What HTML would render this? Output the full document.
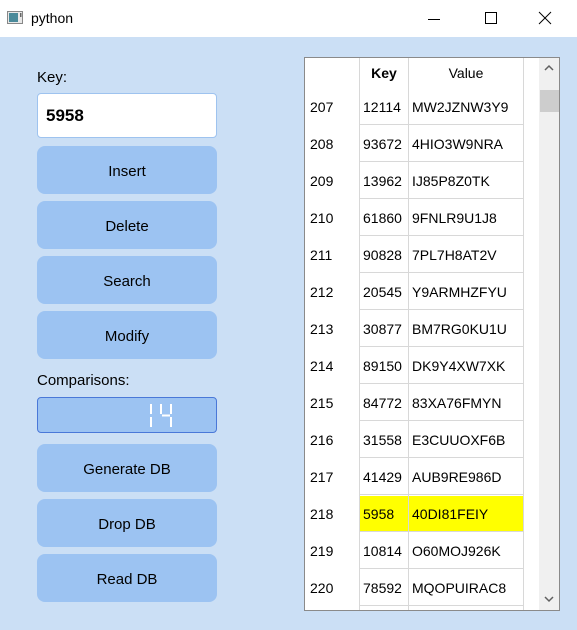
<!DOCTYPE html>
<html><head><style>
body{margin:0;width:577px;height:630px;background:#cbdff5;font-family:"Liberation Sans","DejaVu Sans",sans-serif;position:relative;overflow:hidden}
.tb{position:absolute;left:0;top:0;width:577px;height:37px;background:#fff}
.tb .t{position:absolute;left:31px;top:10px;font-size:14px;color:#000}
.ab{position:absolute}
.lbl{position:absolute;left:37px;font-size:15px;color:#000}
.inp{position:absolute;left:37px;top:93px;width:178px;height:43px;background:#fff;border:1px solid #9ec3ef;border-radius:4px;box-sizing:content-box}
.inp span{position:absolute;left:8px;top:12px;font-size:17px;font-weight:bold}
.btn{position:absolute;left:37px;width:180px;height:48px;background:#9cc3f2;border-radius:8px;text-align:center;line-height:52px;font-size:15px;color:#000}
.lcd{position:absolute;left:37px;top:397px;width:178px;height:34px;background:#9cc3f2;border:1px solid #4a78d8;border-radius:4px}
.tbl{position:absolute;left:304px;top:57px;width:254px;height:552px;border:1px solid #8a8a8a;background:#fff;overflow:hidden}
.row{position:absolute;left:0;height:37px;font-size:14px}
.row div{position:absolute;top:0;height:36px;line-height:36px}
.sb{position:absolute;left:234px;top:0;width:20px;height:552px;background:#f0f0f0}
</style></head><body>
<div class="tb">
<svg class="ab" style="left:7px;top:11px" width="18" height="14"><rect x="0.5" y="0.5" width="15" height="12" fill="#e8e8e8" stroke="#888"/><rect x="2" y="2" width="9" height="9" fill="#4a8a9a"/><rect x="13" y="2" width="1.5" height="4" fill="#666"/></svg>
<span class="t">python</span>
<svg class="ab" style="left:420px;top:8px" width="150" height="22" stroke="#000" stroke-width="1" fill="none"><line x1="8" y1="11.5" x2="20" y2="11.5"/><rect x="65.5" y="4.5" width="11" height="11"/><line x1="119" y1="4" x2="131" y2="16"/><line x1="131" y1="4" x2="119" y2="16"/></svg>
</div>
<div class="lbl" style="top:69px">Key:</div>
<div class="inp"><span>5958</span></div>
<div class="btn" style="top:146px">Insert</div>
<div class="btn" style="top:201px">Delete</div>
<div class="btn" style="top:256px">Search</div>
<div class="btn" style="top:311px">Modify</div>
<div class="lbl" style="top:372px">Comparisons:</div>
<div class="lcd"><svg class="ab" style="left:108px;top:5px" width="30" height="26" stroke="#fff" stroke-width="2" fill="none"><line x1="5" y1="1" x2="5" y2="11"/><line x1="5" y1="14" x2="5" y2="24"/><line x1="15" y1="1" x2="15" y2="11"/><line x1="16" y1="12.5" x2="24" y2="12.5"/><line x1="25" y1="1" x2="25" y2="11"/><line x1="25" y1="14" x2="25" y2="24"/></svg></div>
<div class="btn" style="top:444px">Generate DB</div>
<div class="btn" style="top:499px">Drop DB</div>
<div class="btn" style="top:554px">Read DB</div>
<div class="tbl">
<div style="position:absolute;left:54px;top:0;width:1px;height:552px;background:#d8d8d8"></div>
<div style="position:absolute;left:103px;top:0;width:1px;height:552px;background:#d8d8d8"></div>
<div style="position:absolute;left:218px;top:0;width:1px;height:552px;background:#d8d8d8"></div>
<div class="row" style="top:0;height:31px"><div style="left:55px;width:48px;text-align:center;line-height:31px;font-weight:bold">Key</div><div style="left:104px;width:114px;text-align:center;line-height:31px">Value</div></div>
<div id="rows"></div>
<div class="sb"><div style="position:absolute;left:1px;top:32px;width:19px;height:22px;background:#cdcdcd"></div>
<svg class="ab" style="left:5px;top:6px" width="10" height="8" stroke="#606060" stroke-width="1.5" fill="none"><polyline points="1,6 5,2 9,6"/></svg>
<svg class="ab" style="left:5px;top:537px" width="10" height="8" stroke="#606060" stroke-width="1.5" fill="none"><polyline points="1,2 5,6 9,2"/></svg></div>
</div>
<script>
var d=[["207","12114","MW2JZNW3Y9"],["208","93672","4HIO3W9NRA"],["209","13962","IJ85P8Z0TK"],["210","61860","9FNLR9U1J8"],["211","90828","7PL7H8AT2V"],["212","20545","Y9ARMHZFYU"],["213","30877","BM7RG0KU1U"],["214","89150","DK9Y4XW7XK"],["215","84772","83XA76FMYN"],["216","31558","E3CUUOXF6B"],["217","41429","AUB9RE986D"],["218","5958","40DI81FEIY"],["219","10814","O60MOJ926K"],["220","78592","MQOPUIRAC8"],["221","",""]];
var h="";for(var i=0;i<d.length;i++){var t=31+i*37,y=d[i][0]=="218";
h+='<div class="row" style="top:'+t+'px"><div style="left:5px">'+d[i][0]+'</div>'+
'<div style="left:55px;width:48px;padding-left:3px;box-sizing:border-box;'+(y?'background:#ffff00;':'')+'border-bottom:1px solid #d8d8d8;height:36px">'+d[i][1]+'</div>'+
'<div style="left:104px;width:114px;padding-left:3px;box-sizing:border-box;'+(y?'background:#ffff00;':'')+'border-bottom:1px solid #d8d8d8;height:36px">'+d[i][2]+'</div></div>';}
document.getElementById("rows").innerHTML=h;
</script>
</body></html>
